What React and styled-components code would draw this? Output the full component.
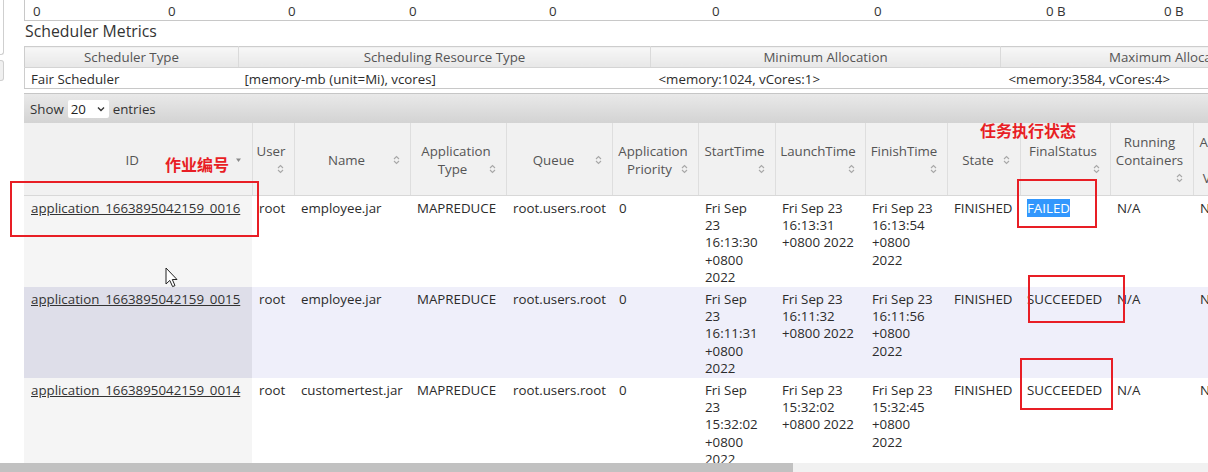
import React from 'react';
import styled, { createGlobalStyle } from 'styled-components';

const Global = createGlobalStyle`
  html, body { margin: 0; padding: 0; background: #fff; }
  body { font-family: "Open Sans", "Noto Sans", sans-serif; font-size: 13.3px; color: #2b2b2b; }
  #root { height: 472px; }
`;

const Page = styled.div`
  height: 472px;
  display: flex;
  flex-direction: column;
  overflow: hidden;
`;

const Viewport = styled.div`
  flex: 1;
  min-height: 0;
  display: flex;
  overflow: hidden;
  position: relative;
`;

const Sidebar = styled.div`
  width: 24px;
  flex: none;
  display: flex;
  flex-direction: column;
  gap: 5px;
`;

const SideBox = styled.div`
  width: 3px;
  height: ${p => p.$h}px;
  border-right: 1px solid #cfcfcf;
  border-bottom: 1px solid #cfcfcf;
  border-top: ${p => (p.$top ? 'none' : '1px solid #cfcfcf')};
  border-radius: ${p => (p.$top ? '0 0 3px 0' : '0 3px 3px 0')};
  background: ${p => p.$bg};
`;

const Main = styled.div`
  flex: 1;
  min-width: 0;
  overflow: hidden;
`;

const MetricsRow = styled.div`
  display: grid;
  grid-template-columns: 143px 120px 121px 140px 163px 162px 172px 118px 120px;
  width: max-content;
  height: 20px;
  border-left: 1px solid #c8c8c8;
  border-bottom: 1px solid #c8c8c8;
`;

const MetricCell = styled.div`
  line-height: 23px;
  padding-left: ${p => (p.$first ? 8 : 0)}px;
  color: #333;
`;

const Heading = styled.h3`
  margin: 0;
  font-size: 15.8px;
  font-weight: normal;
  line-height: 20px;
  color: #333;
  padding-left: 1px;
`;

const SchedTable = styled.table`
  border-collapse: collapse;
  table-layout: fixed;
  width: 1320px;
  margin-top: 5px;
  font-size: 13.3px;
`;

const Col = styled.col`
  width: ${p => p.$w}px;
`;

const SchedTh = styled.th`
  box-sizing: border-box;
  height: 20px;
  padding: 1px 6px 0;
  line-height: 19px;
  font-weight: normal;
  color: #555;
  text-align: center;
  background: linear-gradient(#f7f7f7, #e7e7e7);
  border-top: 1px solid #cdcdcd;
  border-bottom: 1px solid #d4d4d4;
  border-right: 1px solid #dadada;
  border-left: ${p => (p.$first ? '1px solid #cdcdcd' : 'none')};
  white-space: nowrap;
  overflow: hidden;
`;

const SchedTd = styled.td`
  box-sizing: border-box;
  height: 20px;
  padding: 2px ${p => p.$pad}px 0;
  line-height: 18px;
  color: #2b2b2b;
  border-bottom: 1px solid #c8c8c8;
  border-left: ${p => (p.$first ? '1px solid #cdcdcd' : 'none')};
  white-space: nowrap;
`;

const Toolbar = styled.div`
  width: 1243px;
  height: 30px;
  margin-top: 4px;
  box-sizing: border-box;
  border-top: 1px solid #c6c6c6;
  background: linear-gradient(#e9e9e9, #d3d3d3);
  display: flex;
  align-items: center;
  gap: 4px;
  padding-left: 6px;
  color: #333;
`;

const FakeSelect = styled.span`
  display: inline-flex;
  align-items: center;
  justify-content: space-between;
  width: 41px;
  height: 18px;
  box-sizing: border-box;
  padding: 0 4px 0 3px;
  background: #fff;
  border-radius: 2px;
  color: #222;
`;

const AppsTable = styled.table`
  border-collapse: collapse;
  table-layout: fixed;
  width: 1243px;
  font-size: 13.3px;
`;

const Th = styled.th`
  box-sizing: border-box;
  height: 72px;
  padding: 3px 10px 0 6px;
  background: #f1f1f1;
  border-right: 1px solid #dedede;
  border-bottom: 1px solid #d8d8d8;
  font-weight: normal;
  color: #555;
  vertical-align: middle;
  white-space: nowrap;
`;

const HeadLine = styled.div`
  display: flex;
  align-items: center;
  justify-content: ${p => (p.$iconOnly ? 'flex-end' : 'center')};
  height: 18px;
  line-height: 18px;
`;

const HeadText = styled.span`
  flex: 1;
  text-align: center;
`;

const Td = styled.td`
  padding: 4px 7px 0;
  vertical-align: top;
  line-height: 17.4px;
  white-space: nowrap;
  color: #2b2b2b;
  background: ${p =>
    p.$odd ? (p.$sorted ? '#dedee9' : '#efeffa') : p.$sorted ? '#f5f5f5' : '#ffffff'};
`;

const AppLink = styled.a`
  color: #333;
  text-decoration: underline;
`;

const Selected = styled.span`
  background: #3297fd;
  color: #fff;
`;

const Scrollbar = styled.div`
  height: 9px;
  flex: none;
  background: #f1f1f1;
  display: flex;
`;

const Thumb = styled.div`
  width: 793px;
  background: #c1c1c1;
`;

const RedBox = styled.div`
  position: absolute;
  box-sizing: border-box;
  border: 2px solid #e81e25;
  left: ${p => p.$x}px;
  top: ${p => p.$y}px;
  width: ${p => p.$w}px;
  height: ${p => p.$h}px;
  pointer-events: none;
`;

const Note = styled.div`
  position: absolute;
  left: ${p => p.$x}px;
  top: ${p => p.$y}px;
  font-family: "Noto Sans CJK SC", "Noto Sans", sans-serif;
  font-weight: 700;
  font-size: 16px;
  line-height: 16px;
  color: #e81e25;
  white-space: nowrap;
`;

const Cursor = styled.svg`
  position: absolute;
  left: 165px;
  top: 267px;
`;

const SortIcon = () => (
  <svg width="7" height="10" viewBox="0 0 7 10">
    <path d="M1 4 L3.5 1.5 L6 4 M1 6 L3.5 8.5 L6 6" fill="none" stroke="#a8a8a8" strokeWidth="1.1" />
  </svg>
);

const SortDesc = () => (
  <svg width="7" height="10" viewBox="0 0 7 10">
    <path d="M1 3.5 L6 3.5 L3.5 7 Z" fill="#8a8a8a" />
  </svg>
);

const Chevron = () => (
  <svg width="8" height="6" viewBox="0 0 8 6">
    <path d="M1 1.5 L4 4.5 L7 1.5" fill="none" stroke="#333" strokeWidth="1.4" />
  </svg>
);

const metrics = ['0', '0', '0', '0', '0', '0', '0', '0 B', '0 B'];

const schedCols = [
  { w: 214, head: 'Scheduler Type', val: 'Fair Scheduler', pad: 6 },
  { w: 412, head: 'Scheduling Resource Type', val: '[memory-mb (unit=Mi), vcores]', pad: 6 },
  { w: 350, head: 'Minimum Allocation', val: '<memory:1024, vCores:1>', pad: 8 },
  { w: 344, head: 'Maximum Allocation', val: '<memory:3584, vCores:4>', pad: 8 },
];

const headers = [
  { w: 228, lines: ['ID'], sort: 'desc' },
  { w: 42, lines: ['User'], own: true },
  { w: 116, lines: ['Name'] },
  { w: 96, lines: ['Application', 'Type'] },
  { w: 106, lines: ['Queue'] },
  { w: 86, lines: ['Application', 'Priority'] },
  { w: 77, lines: ['StartTime'], own: true },
  { w: 90, lines: ['LaunchTime'], own: true },
  { w: 82, lines: ['FinishTime'], own: true },
  { w: 73, lines: ['State'] },
  { w: 90, lines: ['FinalStatus'], own: true },
  { w: 83, lines: ['Running', 'Containers'], own: true },
  { w: 74, lines: ['Allocated', 'CPU', 'VCores'] },
];

const rows = [
  {
    id: 'application_1663895042159_0016', name: 'employee.jar',
    start: ['Fri Sep', '23', '16:13:30', '+0800', '2022'],
    launch: ['Fri Sep 23', '16:13:31', '+0800 2022'],
    finish: ['Fri Sep 23', '16:13:54', '+0800', '2022'],
    status: 'FAILED', selected: true,
  },
  {
    id: 'application_1663895042159_0015', name: 'employee.jar',
    start: ['Fri Sep', '23', '16:11:31', '+0800', '2022'],
    launch: ['Fri Sep 23', '16:11:32', '+0800 2022'],
    finish: ['Fri Sep 23', '16:11:56', '+0800', '2022'],
    status: 'SUCCEEDED',
  },
  {
    id: 'application_1663895042159_0014', name: 'customertest.jar',
    start: ['Fri Sep', '23', '15:32:02', '+0800', '2022'],
    launch: ['Fri Sep 23', '15:32:02', '+0800 2022'],
    finish: ['Fri Sep 23', '15:32:45', '+0800', '2022'],
    status: 'SUCCEEDED',
  },
];

const Lines = ({ items }) =>
  items.map((t, i) => (
    <React.Fragment key={i}>
      {i > 0 && <br />}
      {t}
    </React.Fragment>
  ));

const Header = ({ h }) => {
  const icon = h.sort === 'desc' ? <SortDesc /> : <SortIcon />;
  return (
    <Th>
      {h.lines.map((l, i) => (
        <HeadLine key={i}>
          <HeadText>{l}</HeadText>
          {!h.own && i === h.lines.length - 1 && icon}
        </HeadLine>
      ))}
      {h.own && <HeadLine $iconOnly>{icon}</HeadLine>}
    </Th>
  );
};

export default function App() {
  return (
    <Page>
      <Global />
      <Viewport>
        <Sidebar>
          <SideBox $top $h={54} $bg="#fff" />
          <SideBox $h={19} $bg="#f0f0f0" />
        </Sidebar>
        <Main>
          <MetricsRow>
            {metrics.map((m, i) => (
              <MetricCell key={i} $first={i === 0}>{m}</MetricCell>
            ))}
          </MetricsRow>
          <Heading>Scheduler Metrics</Heading>
          <SchedTable>
            <colgroup>
              {schedCols.map((c, i) => <Col key={i} $w={c.w} />)}
            </colgroup>
            <thead>
              <tr>
                {schedCols.map((c, i) => <SchedTh key={i} $first={i === 0}>{c.head}</SchedTh>)}
              </tr>
            </thead>
            <tbody>
              <tr>
                {schedCols.map((c, i) => (
                  <SchedTd key={i} $first={i === 0} $pad={c.pad}>{c.val}</SchedTd>
                ))}
              </tr>
            </tbody>
          </SchedTable>
          <Toolbar>
            Show
            <FakeSelect>20<Chevron /></FakeSelect>
            entries
          </Toolbar>
          <AppsTable>
            <colgroup>
              {headers.map((h, i) => <Col key={i} $w={h.w} />)}
            </colgroup>
            <thead>
              <tr>
                {headers.map((h, i) => <Header key={i} h={h} />)}
              </tr>
            </thead>
            <tbody>
              {rows.map((r, i) => {
                const odd = i % 2 === 1;
                return (
                  <tr key={r.id}>
                    <Td $odd={odd} $sorted><AppLink href="#">{r.id}</AppLink></Td>
                    <Td $odd={odd}>root</Td>
                    <Td $odd={odd}>{r.name}</Td>
                    <Td $odd={odd}>MAPREDUCE</Td>
                    <Td $odd={odd}>root.users.root</Td>
                    <Td $odd={odd}>0</Td>
                    <Td $odd={odd}><Lines items={r.start} /></Td>
                    <Td $odd={odd}><Lines items={r.launch} /></Td>
                    <Td $odd={odd}><Lines items={r.finish} /></Td>
                    <Td $odd={odd}>FINISHED</Td>
                    <Td $odd={odd}>{r.selected ? <Selected>{r.status}</Selected> : r.status}</Td>
                    <Td $odd={odd}>N/A</Td>
                    <Td $odd={odd}>N/A</Td>
                  </tr>
                );
              })}
            </tbody>
          </AppsTable>
        </Main>

        <Note $x={165} $y={156}>作业编号</Note>
        <Note $x={980} $y={122}>任务执行状态</Note>
        <RedBox $x={10} $y={181} $w={249} $h={56} />
        <RedBox $x={1017} $y={179} $w={80} $h={49} />
        <RedBox $x={1028} $y={275} $w={97} $h={48} />
        <RedBox $x={1020} $y={358} $w={93} $h={52} />
        <Cursor width="13" height="21" viewBox="0 0 13 21">
          <path d="M1 1 L1 17 L4.8 13.4 L7.6 19.6 L10 18.6 L7.3 12.5 L12 12.5 Z" fill="#fff" stroke="#222" strokeWidth="1" strokeLinejoin="round" />
        </Cursor>
      </Viewport>
      <Scrollbar>
        <Thumb />
      </Scrollbar>
    </Page>
  );
}
